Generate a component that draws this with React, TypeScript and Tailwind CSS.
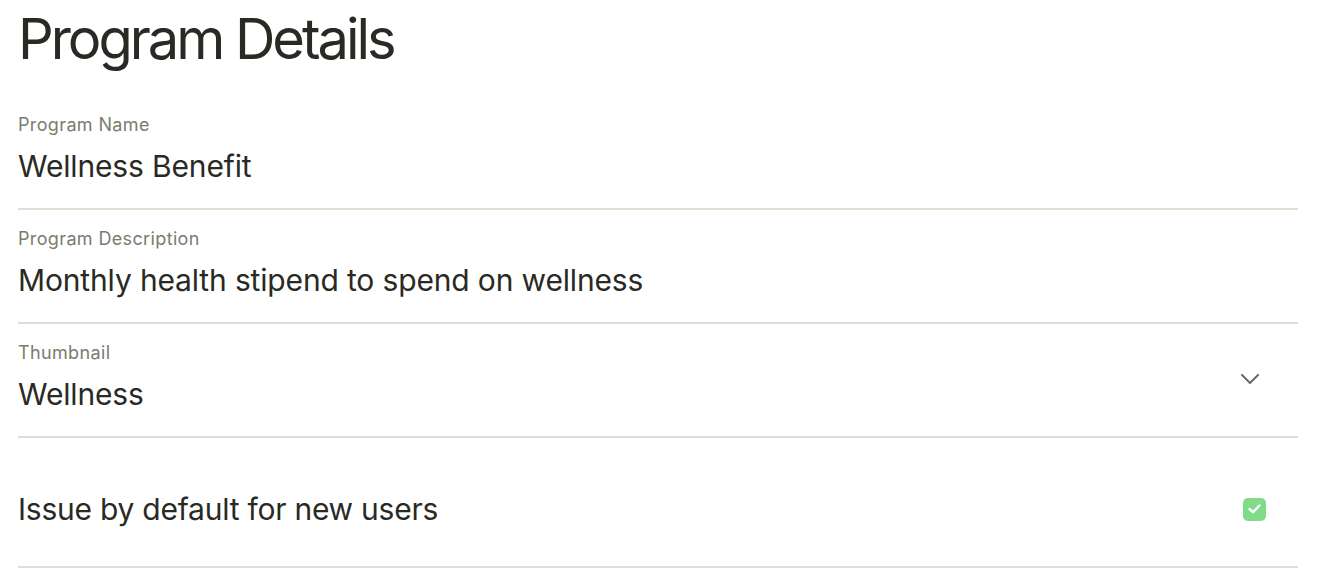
import React from "react";

const font = { fontFamily: "Inter, 'Noto Sans', sans-serif" };

function Field({ label, value, right }: { label: string; value: string; right?: React.ReactNode }) {
  return (
    <div className="flex items-center border-b-2 border-[#dfdfd3] pt-[17px] pb-[24px]">
      <div className="flex flex-1 flex-col">
        <div className="text-[18px] leading-[24px] text-[#7b7c70] tracking-[0.02em]">{label}</div>
        <div className="mt-[11px] text-[30px] leading-[36px] text-[#2a2a25] tracking-[-0.005em]">{value}</div>
      </div>
      {right}
    </div>
  );
}

export default function App() {
  return (
    <div className="min-h-[588px] bg-white" style={font}>
      <div className="ml-[18px] w-[1280px]">
        <h1 className="pt-[11px] mb-[29px] text-[56px] leading-[56px] text-[#2a2a25] tracking-[-0.054em]">
          Program Details
        </h1>
        <Field label="Program Name" value="Wellness Benefit" />
        <Field label="Program Description" value="Monthly health stipend to spend on wellness" />
        <Field
          label="Thumbnail"
          value="Wellness"
          right={
            <svg width="18" height="10" viewBox="0 0 18 10" className="mr-[39px] mt-[4px]" fill="none">
              <path d="M1 1 L9 9 L17 1" stroke="#6b6c5e" strokeWidth="2" strokeLinecap="square" />
            </svg>
          }
        />
        <div className="flex items-center border-b-2 border-[#dfdfd3] pt-[53px] pb-[39px]">
          <div className="flex-1 text-[30px] leading-[36px] text-[#2a2a25] tracking-[-0.008em]">
            Issue by default for new users
          </div>
          <div className="mr-[32px] flex h-[23px] w-[23px] items-center justify-center rounded-[5px] bg-[#80dc8b]">
            <svg width="13" height="10" viewBox="0 0 13 10" fill="none">
              <path d="M1.5 5 L5 8.2 L11.5 1.5" stroke="white" strokeWidth="2.4" strokeLinecap="round" strokeLinejoin="round" />
            </svg>
          </div>
        </div>
      </div>
    </div>
  );
}
